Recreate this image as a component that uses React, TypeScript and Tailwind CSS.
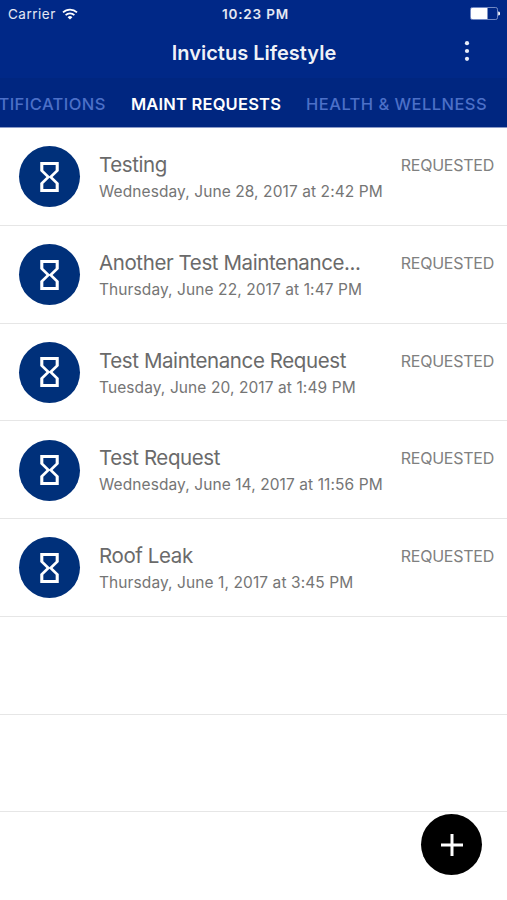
const requests = [
  { title: "Testing", date: "Wednesday, June 28, 2017 at 2:42 PM" },
  { title: "Another Test Maintenance...", date: "Thursday, June 22, 2017 at 1:47 PM" },
  { title: "Test Maintenance Request", date: "Tuesday, June 20, 2017 at 1:49 PM" },
  { title: "Test Request", date: "Wednesday, June 14, 2017 at 11:56 PM" },
  { title: "Roof Leak", date: "Thursday, June 1, 2017 at 3:45 PM" },
];

function HourglassIcon() {
  return (
    <svg viewBox="0 0 24 24" className="ml-[0.5px] h-9 w-[37px]" fill="#fff" preserveAspectRatio="none">
      <path d="M6 2v6h.01L6 8.01 10 12l-4 4 .01.01H6V22h12v-5.99h-.01L18 16l-4-4 4-3.99-.01-.01H18V2H6zm10 14.5V20H8v-3.5l4-4 4 4zm-4-5l-4-4V4h8v3.5l-4 4z" />
    </svg>
  );
}

function StatusBar() {
  return (
    <div className="grid h-7 grid-cols-3 items-center pr-[7px] pl-2 text-[13.5px] leading-none text-white/90">
      <div className="flex items-center gap-[6px]">
        <span className="pt-px tracking-[0.5px]">Carrier</span>
        <svg viewBox="0 0 16 12" className="mb-px h-3 w-4" fill="none" stroke="#fff" strokeWidth="1.7">
          <path d="M1 4.4a10 10 0 0 1 14 0" />
          <path d="M3.6 7.2a6.3 6.3 0 0 1 8.8 0" />
          <path d="M8 11.6 5.6 9.2a3.5 3.5 0 0 1 4.8 0z" fill="#fff" stroke="none" />
        </svg>
      </div>
      <span className="pt-px pl-[3px] text-center font-semibold tracking-[0.8px] whitespace-nowrap">10:23 PM</span>
      <svg viewBox="0 0 30 13" className="mb-px h-[13px] w-[30px] justify-self-end">
        <rect x="0.5" y="0.5" width="27" height="12" rx="1.8" fill="none" stroke="#8fa2d4" strokeWidth="0.8" />
        <path d="M2 1h15.5v11H2a1 1 0 0 1-1-1V2a1 1 0 0 1 1-1z" fill="#fff" />
        <path d="M28.2 4.5a2 2 0 0 1 0 4z" fill="#fff" />
      </svg>
    </div>
  );
}

export default function App() {
  return (
    <main className="relative h-[900px] w-[507px] overflow-hidden bg-white font-['Inter',sans-serif]">
      <header className="h-32 border-b border-[#8b9bc8] bg-[#002887]">
        <StatusBar />
        <div className="grid h-[50px] grid-cols-[1fr_auto_1fr] items-center">
          <h1 className="col-start-2 mb-px ml-px text-[20px] leading-none font-semibold whitespace-nowrap text-white/95">Invictus Lifestyle</h1>
          <svg viewBox="0 0 6 22" className="mr-[37px] mb-[4px] h-[22px] w-1.5 justify-self-end" fill="#e8edfa">
            <circle cx="3" cy="3.2" r="2.1" />
            <circle cx="3" cy="11" r="2.1" />
            <circle cx="3" cy="18.8" r="2.1" />
          </svg>
        </div>
        <nav className="flex h-[49px] items-center justify-end gap-[25px] bg-[#002680] pt-[3px] pr-5 text-[16.5px] leading-none font-medium tracking-[0.45px] whitespace-nowrap text-[#4c70c8]">
          <span>NOTIFICATIONS</span>
          <span className="font-semibold tracking-[0.2px] text-white">MAINT REQUESTS</span>
          <span>HEALTH &amp; WELLNESS</span>
        </nav>
      </header>

      <ul>
        {requests.map((request) => (
          <li key={request.title} className="flex h-[97.75px] border-b border-[#e6e6e6] pt-[18.25px] pr-[13px] pl-[19px] text-[#6a6a6a]">
            <div className="flex size-[61px] shrink-0 items-center justify-center rounded-full bg-[#00307a]">
              <HourglassIcon />
            </div>
            <div className="ml-[19px] pt-[5.75px] whitespace-nowrap">
              <h2 className="text-[20.5px] leading-[26px] tracking-[-0.4px]">{request.title}</h2>
              <p className="mt-0.5 text-[15.5px] leading-6 tracking-[0.09px] text-[#757575]">{request.date}</p>
            </div>
            <span className="ml-auto pt-[5.75px] text-[16px] leading-[26px] tracking-[-0.25px] text-[#808080]">REQUESTED</span>
          </li>
        ))}
        <li className="h-[97.75px] border-b border-[#e6e6e6]" />
        <li className="h-[97.75px] border-b border-[#e6e6e6]" />
      </ul>

      <button type="button" aria-label="Add request" className="absolute right-[25px] bottom-[25px] flex size-[61px] items-center justify-center rounded-full bg-black">
        <svg viewBox="0 0 22 22" className="size-[22px]" stroke="#fff" strokeWidth="3">
          <path d="M11 0v22M0 11h22" />
        </svg>
      </button>
    </main>
  );
}
